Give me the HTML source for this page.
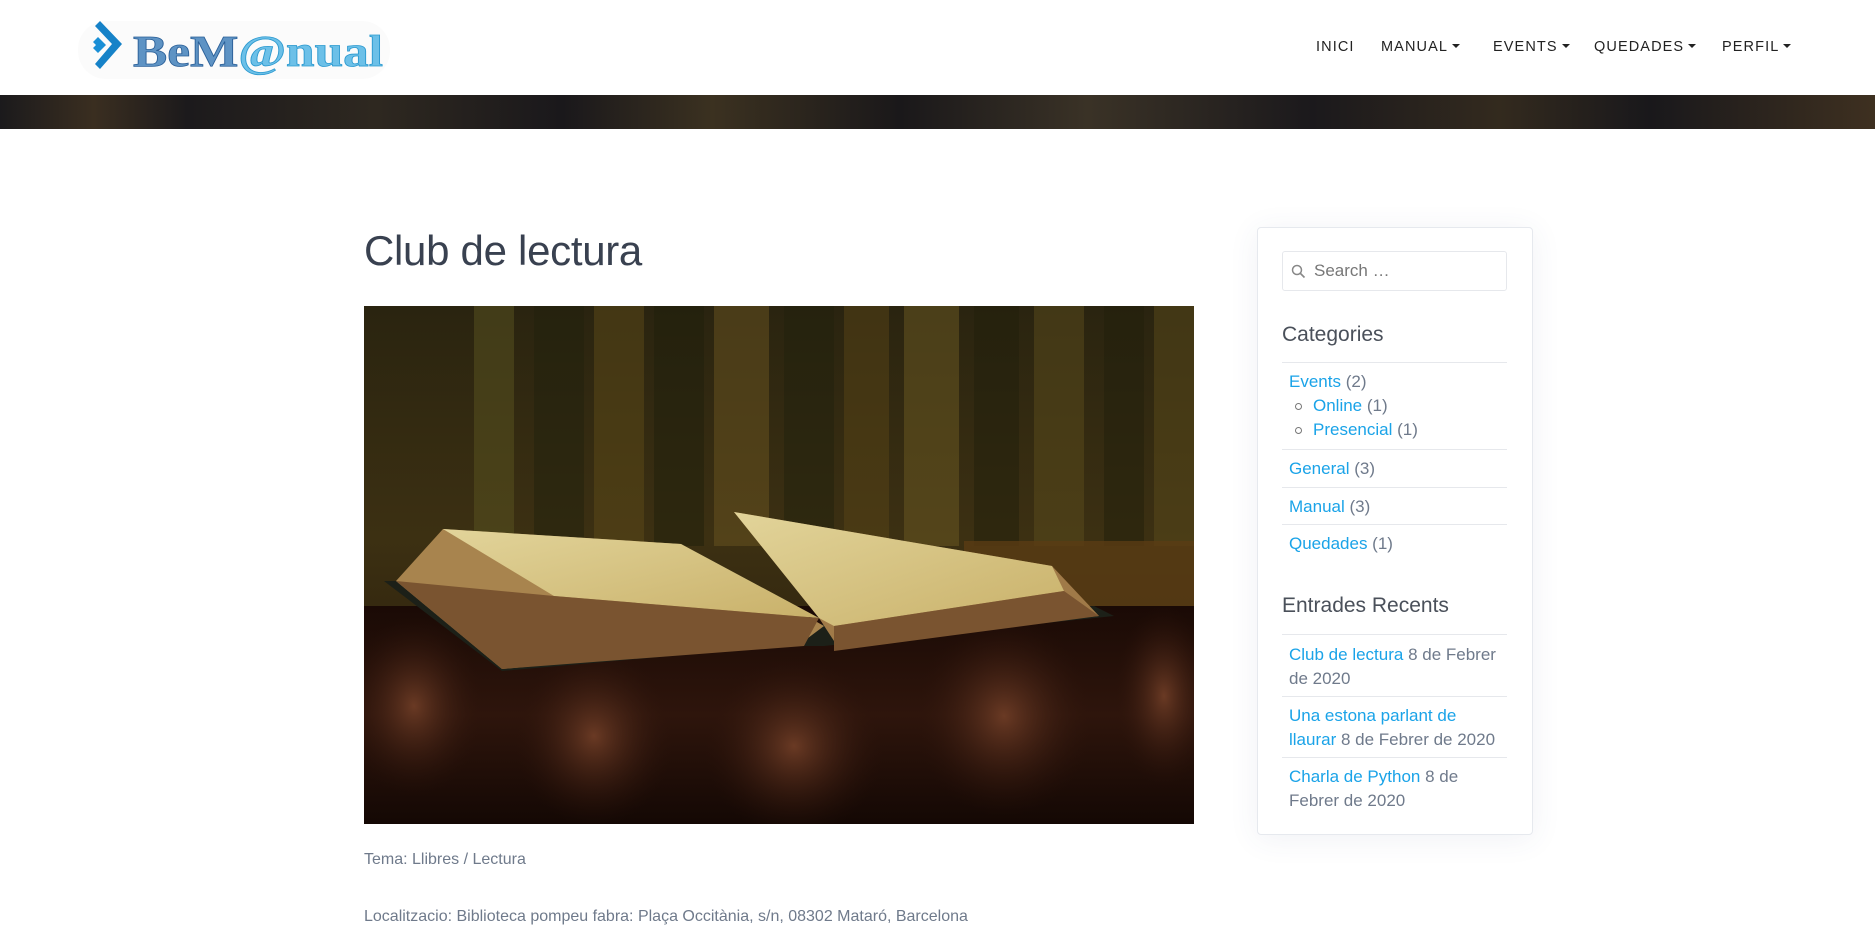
<!DOCTYPE html>
<html><head><meta charset="utf-8"><style>
*{margin:0;padding:0;box-sizing:border-box}
body{width:1875px;height:932px;overflow:hidden;background:#fff;font-family:"Liberation Sans",sans-serif;position:relative}
.hdr{position:absolute;left:0;top:0;width:1875px;height:95px;background:#fff}
.strip{position:absolute;left:0;top:95px;width:1875px;height:34px;background:linear-gradient(90deg,#1b1a1c 0%,#3a2e20 5%,#1c1a1c 10%,#2e2820 20%,#1a181b 30%,#3b3120 38%,#1a181a 48%,#3a3226 58%,#1b191c 70%,#332a1e 80%,#19181b 88%,#3e3020 100%)}
.nav{position:absolute;top:39px;font-size:14.5px;letter-spacing:1.1px;color:#222;white-space:nowrap}
.nav b{display:inline-block;width:0;height:0;border-left:4px solid transparent;border-right:4px solid transparent;border-top:4px solid #222;margin-left:4px;vertical-align:3px}
.abs{position:absolute;white-space:nowrap}
h1{position:absolute;left:364px;top:227px;font-weight:normal;font-size:42px;color:#394150;letter-spacing:-0.3px}
.p{font-size:16px;color:#6f7a8b}
.card{position:absolute;left:1257px;top:227px;width:276px;height:608px;border:1px solid #e6e9ee;border-radius:4px;background:#fff;box-shadow:0 4px 30px rgba(60,80,130,.08)}
.line{position:absolute;left:1282px;width:225px;height:1px;background:#e6e8ec}
.s{font-size:17px;color:#6f7a8b;position:absolute;white-space:nowrap}
.s a{color:#1aa3e8;text-decoration:none}
.hd{font-size:21px;color:#4a505a;position:absolute}
.dot{position:absolute;width:7px;height:7px;border:1.3px solid #777;border-radius:50%}
</style></head><body>
<div class="hdr"></div>
<div class="strip"></div>
<svg class="abs" style="left:78px;top:18px" width="312" height="62" viewBox="0 0 312 62">
<rect x="0" y="3" width="312" height="58" rx="28" fill="#fbfbfb"/>
<path d="M22 3 L44 26 L22 51 L17 46 L34 26 L17 8Z" fill="#1682c8"/>
<path d="M20 19 L28 27 L20 35 L15 30 L18 27 L15 24Z" fill="#1a8fd6"/>
<text x="55" y="48" font-family="Liberation Serif,serif" font-size="44" font-weight="bold" fill="#5e93c4" stroke="#2a5f98" stroke-width=".8" textLength="250" lengthAdjust="spacingAndGlyphs">BeM<tspan fill="#6cc0e8" stroke="#2d9ad0">@nual</tspan></text>
</svg>
<div class="nav" style="left:1316px">INICI</div>
<div class="nav" style="left:1381px">MANUAL<b></b></div>
<div class="nav" style="left:1493px">EVENTS<b></b></div>
<div class="nav" style="left:1594px">QUEDADES<b></b></div>
<div class="nav" style="left:1722px">PERFIL<b></b></div>

<h1>Club de lectura</h1>
<svg class="abs" style="left:364px;top:306px" width="830" height="518" viewBox="0 0 830 518" preserveAspectRatio="none">
<defs>
<linearGradient id="bg" x1="0" y1="0" x2="0" y2="1"><stop offset="0" stop-color="#2a2410"/><stop offset=".45" stop-color="#3c3012"/><stop offset="1" stop-color="#22150a"/></linearGradient>
<linearGradient id="sofa" x1="0" y1="0" x2="0" y2="1"><stop offset="0" stop-color="#1a0a05"/><stop offset=".5" stop-color="#2e150c"/><stop offset="1" stop-color="#140804"/></linearGradient>
<linearGradient id="pg" x1="0" y1="0" x2="1" y2="1"><stop offset="0" stop-color="#e2d49a"/><stop offset="1" stop-color="#c9b16a"/></linearGradient>
<radialGradient id="bump"><stop offset="0" stop-color="#6a3a24"/><stop offset="1" stop-color="#2a120a" stop-opacity="0"/></radialGradient>
</defs>
<rect width="830" height="518" fill="url(#bg)"/>
<g opacity=".5">
<rect x="110" y="0" width="40" height="240" fill="#5a5420"/><rect x="170" y="0" width="50" height="240" fill="#22220e"/>
<rect x="230" y="0" width="50" height="240" fill="#5d4a18"/><rect x="290" y="0" width="50" height="240" fill="#20200c"/>
<rect x="350" y="0" width="55" height="240" fill="#6a5420"/><rect x="420" y="0" width="50" height="240" fill="#22220e"/>
<rect x="480" y="0" width="45" height="240" fill="#584416"/><rect x="540" y="0" width="55" height="240" fill="#6c5a22"/>
<rect x="610" y="0" width="45" height="240" fill="#22200c"/><rect x="670" y="0" width="50" height="240" fill="#5b4c1c"/>
<rect x="740" y="0" width="40" height="240" fill="#22200c"/><rect x="790" y="0" width="40" height="240" fill="#5a4a1a"/>
</g>
<rect x="600" y="235" width="230" height="80" fill="#5a3c14" opacity=".8"/>
<rect x="0" y="300" width="830" height="218" fill="url(#sofa)"/>
<g fill="url(#bump)"><ellipse cx="50" cy="400" rx="70" ry="90"/><ellipse cx="230" cy="430" rx="80" ry="90"/><ellipse cx="430" cy="440" rx="90" ry="90"/><ellipse cx="640" cy="410" rx="90" ry="100"/><ellipse cx="800" cy="390" rx="50" ry="90"/></g>
<path d="M20 275 L138 365 L420 340 L460 340 L750 310 L730 300 L460 318 L140 355 L40 275Z" fill="#1c2018"/>
<path d="M32 275 L79 223 L317 238 L460 320 L440 335 L138 363Z" fill="#a8844e"/>
<path d="M79 223 L317 238 L455 312 L190 290Z" fill="url(#pg)"/>
<path d="M370 206 L688 260 L735 310 L470 335 L455 312Z" fill="#a07a48"/>
<path d="M370 206 L688 260 L700 285 L470 320 L455 312Z" fill="url(#pg)"/>
<path d="M32 275 L190 290 L455 312 L440 340 L138 363Z" fill="#7a5430"/>
<path d="M470 320 L700 285 L735 310 L470 345Z" fill="#7a5430"/>
</svg>
<div class="abs p" style="left:364px;top:851px">Tema: Llibres / Lectura</div>
<div class="abs p" style="left:364px;top:908px">Localitzacio: Biblioteca pompeu fabra: Plaça Occitània, s/n, 08302 Mataró, Barcelona</div>

<div class="card"></div>
<div class="abs" style="left:1282px;top:251px;width:225px;height:40px;border:1px solid #e6e8ec;border-radius:3px"></div>
<svg class="abs" style="left:1291px;top:264px" width="15" height="15" viewBox="0 0 15 15"><circle cx="6" cy="6" r="4.5" fill="none" stroke="#888" stroke-width="1.5"/><path d="M9.5 9.5 L13.5 13.5" stroke="#888" stroke-width="1.6"/></svg>
<div class="s" style="left:1314px;top:261px;color:#777">Search …</div>
<div class="hd" style="left:1282px;top:323px">Categories</div>
<div class="line" style="top:362px"></div>
<div class="s" style="left:1289px;top:372px"><a>Events</a> (2)</div>
<div class="dot" style="left:1295px;top:403px"></div>
<div class="s" style="left:1313px;top:396px"><a>Online</a> (1)</div>
<div class="dot" style="left:1295px;top:427px"></div>
<div class="s" style="left:1313px;top:420px"><a>Presencial</a> (1)</div>
<div class="line" style="top:449px"></div>
<div class="s" style="left:1289px;top:459px"><a>General</a> (3)</div>
<div class="line" style="top:487px"></div>
<div class="s" style="left:1289px;top:497px"><a>Manual</a> (3)</div>
<div class="line" style="top:524px"></div>
<div class="s" style="left:1289px;top:534px"><a>Quedades</a> (1)</div>
<div class="hd" style="left:1282px;top:594px">Entrades Recents</div>
<div class="line" style="top:634px"></div>
<div class="s" style="left:1289px;top:643px;line-height:24px"><a>Club de lectura</a> 8 de Febrer<br>de 2020</div>
<div class="line" style="top:696px"></div>
<div class="s" style="left:1289px;top:704px;line-height:24px"><a>Una estona parlant de<br>llaurar</a> 8 de Febrer de 2020</div>
<div class="line" style="top:757px"></div>
<div class="s" style="left:1289px;top:765px;line-height:24px"><a>Charla de Python</a> 8 de<br>Febrer de 2020</div>
</body></html>
